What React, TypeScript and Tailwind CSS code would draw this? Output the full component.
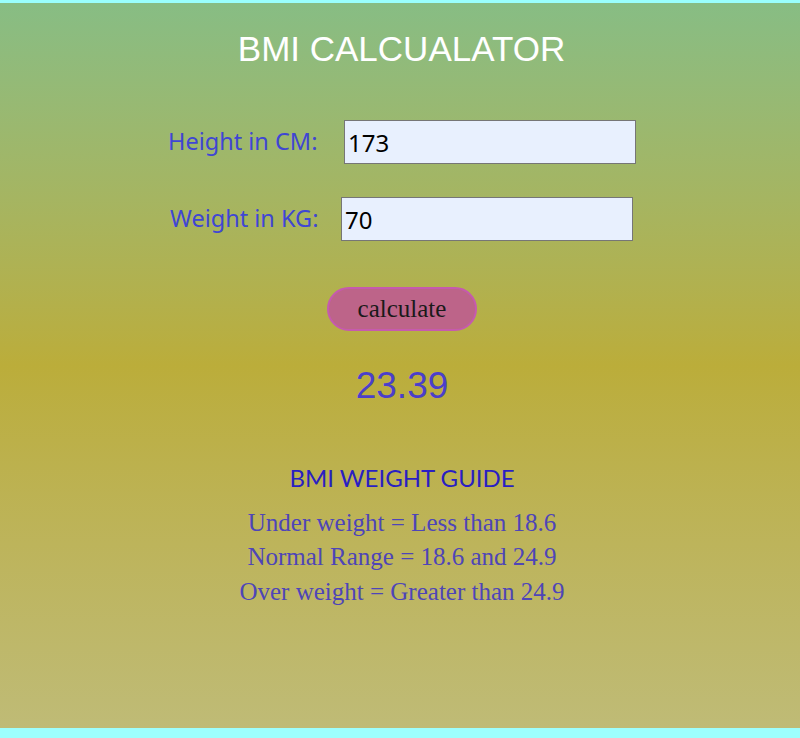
import React from "react";

export default function App() {
  return (
    <div className="flex h-[738px] w-full flex-col">
      <div className="h-[3px] w-full bg-[#99fffd]" />
      <div className="flex flex-1 flex-col items-center bg-linear-to-b from-[#87bd84] via-[#bbad3a] to-[#bfbb76]">
        <h1 className="mt-[26px] ml-[3px] text-[35px] leading-[40px] text-white [font-family:'Liberation_Sans',Arial,sans-serif]">
          BMI CALCUALATOR
        </h1>

        <div className="mt-[51px] flex items-center gap-[26px] pl-[4px] [font-family:'Noto_Sans',sans-serif]">
          <label className="w-[150px] shrink-0 whitespace-nowrap text-[23.5px] text-[#3f46d4]">Height in CM:</label>
          <input
            readOnly
            value="173"
            className="h-[44px] w-[292px] border border-[#767676] bg-[#e8f0fe] pl-[3px] text-[24px] text-black outline-none"
          />
        </div>

        <div className="mt-[33px] flex items-center gap-[24px] pl-[2px] [font-family:'Noto_Sans',sans-serif]">
          <label className="w-[148px] shrink-0 whitespace-nowrap pl-[1px] text-[23.5px] text-[#3f46d4]">Weight in KG:</label>
          <input
            readOnly
            value="70"
            className="h-[44px] w-[292px] border border-[#767676] bg-[#e8f0fe] pl-[3px] text-[24px] text-black outline-none"
          />
        </div>

        <button className="mt-[46px] ml-[4px] flex h-[44px] w-[150px] items-center justify-center rounded-full border-2 border-[#c65aae] bg-[#bd6489] text-[25px] text-[#1a1a1a] [font-family:'Liberation_Serif','Times_New_Roman',serif]">
          calculate
        </button>

        <div className="mt-[27px] ml-[4px] text-[37px] text-[#4b3fca] [font-family:'Liberation_Sans',Arial,sans-serif]">
          23.39
        </div>

        <h2 className="mt-[49px] ml-[4px] text-[24px] leading-[29px] text-[#2a1fc2] [font-family:Lato,sans-serif]">
          BMI WEIGHT GUIDE
        </h2>

        <div className="mt-[14px] ml-[4px] flex flex-col items-center text-[25px] leading-[34.5px] text-[#4e45b8] [font-family:'Liberation_Serif','Times_New_Roman',serif]">
          <p>Under weight = Less than 18.6</p>
          <p>Normal Range = 18.6 and 24.9</p>
          <p>Over weight = Greater than 24.9</p>
        </div>
      </div>
      <div className="h-[10px] w-full bg-[#9dfffd]" />
    </div>
  );
}
